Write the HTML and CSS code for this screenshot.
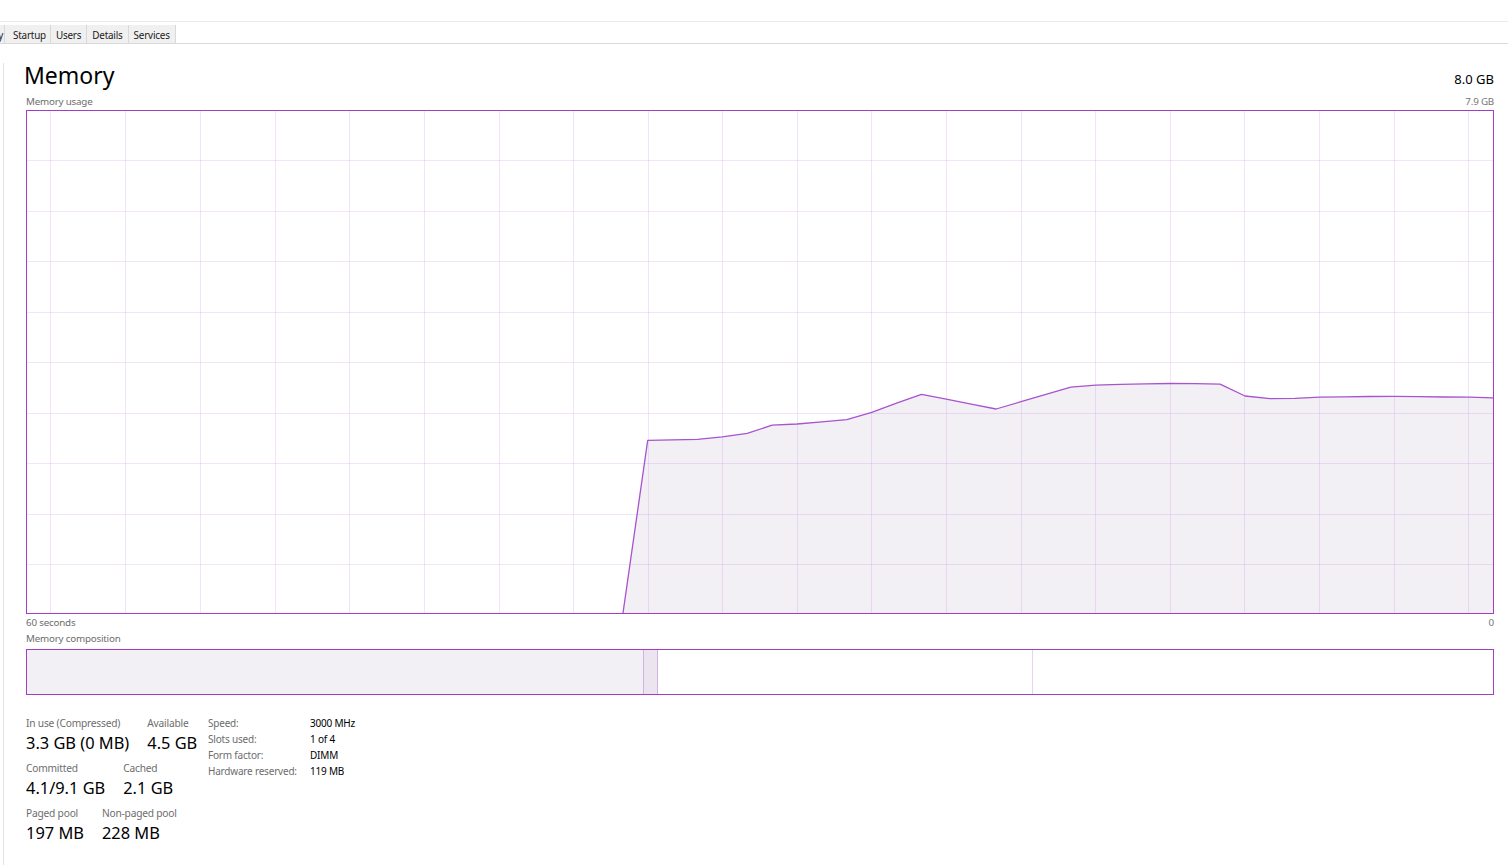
FILE: index.html
```html
<!DOCTYPE html>
<html lang="en">
<head>
<meta charset="utf-8">
<title>Task Manager – Memory</title>
<link rel="stylesheet" href="styles.css">
</head>
<body>
<div class="window">
  <div class="titlebar"></div>
  <nav class="tabs">
    <div class="tab tab-clipped"><span>App history</span></div>
    <div class="tab tab-startup">Startup</div>
    <div class="tab">Users</div>
    <div class="tab">Details</div>
    <div class="tab">Services</div>
  </nav>
  <div class="body">
    <aside class="sidebar"></aside>
    <main class="panel">
      <header class="panel-head">
        <h1 class="panel-title">Memory</h1>
        <span class="panel-total">8.0 GB</span>
      </header>
      <div class="caption-row caption-first"><span>Memory usage</span><span class="muted">7.9 GB</span></div>
      <div class="usage-graph">
        <svg class="usage-svg" viewBox="27 111 1466 502" preserveAspectRatio="none">
          <!-- area under the usage curve -->
          <polygon class="usage-fill" points="623,613 647.7,440.3 672.6,439.8 697.5,439.3 722.3,436.8 747.2,433.3 772.1,425.2 797,424 821.9,421.8 846.8,419.6 871.7,412.3 896.6,403.2 921.4,394.3 946.3,399.2 971.2,404.1 996.1,409 1021,401.7 1045.9,394.4 1070.8,387.2 1095.7,385.2 1120.5,384.4 1145.4,383.9 1170.3,383.5 1195.2,383.6 1220.1,384.2 1245,396 1269.9,398.6 1294.8,398.4 1319.6,397.1 1344.5,396.8 1369.4,396.5 1394.3,396.4 1419.2,396.6 1444.1,397 1469,397.2 1494,397.8 1494,613"/>
          <!-- grid -->
          <g class="grid">
            <line x1="50.5" y1="111" x2="50.5" y2="613"/>
            <line x1="125.5" y1="111" x2="125.5" y2="613"/>
            <line x1="200.5" y1="111" x2="200.5" y2="613"/>
            <line x1="275.5" y1="111" x2="275.5" y2="613"/>
            <line x1="349.5" y1="111" x2="349.5" y2="613"/>
            <line x1="424.5" y1="111" x2="424.5" y2="613"/>
            <line x1="499.5" y1="111" x2="499.5" y2="613"/>
            <line x1="573.5" y1="111" x2="573.5" y2="613"/>
            <line x1="648.5" y1="111" x2="648.5" y2="613"/>
            <line x1="722.5" y1="111" x2="722.5" y2="613"/>
            <line x1="797.5" y1="111" x2="797.5" y2="613"/>
            <line x1="871.5" y1="111" x2="871.5" y2="613"/>
            <line x1="946.5" y1="111" x2="946.5" y2="613"/>
            <line x1="1021.5" y1="111" x2="1021.5" y2="613"/>
            <line x1="1095.5" y1="111" x2="1095.5" y2="613"/>
            <line x1="1170.5" y1="111" x2="1170.5" y2="613"/>
            <line x1="1244.5" y1="111" x2="1244.5" y2="613"/>
            <line x1="1319.5" y1="111" x2="1319.5" y2="613"/>
            <line x1="1394.5" y1="111" x2="1394.5" y2="613"/>
            <line x1="1468.5" y1="111" x2="1468.5" y2="613"/>
            <line x1="27" y1="160.5" x2="1493" y2="160.5"/>
            <line x1="27" y1="211.5" x2="1493" y2="211.5"/>
            <line x1="27" y1="261.5" x2="1493" y2="261.5"/>
            <line x1="27" y1="312.5" x2="1493" y2="312.5"/>
            <line x1="27" y1="362.5" x2="1493" y2="362.5"/>
            <line x1="27" y1="413.5" x2="1493" y2="413.5"/>
            <line x1="27" y1="463.5" x2="1493" y2="463.5"/>
            <line x1="27" y1="514.5" x2="1493" y2="514.5"/>
            <line x1="27" y1="564.5" x2="1493" y2="564.5"/>
          </g>
          <!-- usage curve -->
          <polyline class="usage-line" points="623,613 647.7,440.3 672.6,439.8 697.5,439.3 722.3,436.8 747.2,433.3 772.1,425.2 797,424 821.9,421.8 846.8,419.6 871.7,412.3 896.6,403.2 921.4,394.3 946.3,399.2 971.2,404.1 996.1,409 1021,401.7 1045.9,394.4 1070.8,387.2 1095.7,385.2 1120.5,384.4 1145.4,383.9 1170.3,383.5 1195.2,383.6 1220.1,384.2 1245,396 1269.9,398.6 1294.8,398.4 1319.6,397.1 1344.5,396.8 1369.4,396.5 1394.3,396.4 1419.2,396.6 1444.1,397 1469,397.2 1494,397.8"/>
        </svg>
      </div>
      <div class="caption-row caption-axis"><span>60 seconds</span><span class="muted">0</span></div>
      <div class="caption-row caption-comp"><span>Memory composition</span></div>
      <div class="composition">
        <div class="seg seg-inuse"></div>
        <div class="seg seg-modified"></div>
        <div class="seg seg-standby"></div>
        <div class="seg seg-free"></div>
      </div>
      <section class="stats">
        <div class="stats-main">
          <div class="stat-row">
            <div class="stat"><div class="stat-label">In use (Compressed)</div><div class="stat-value">3.3 GB (0 MB)</div></div>
            <div class="stat"><div class="stat-label">Available</div><div class="stat-value">4.5 GB</div></div>
          </div>
          <div class="stat-row">
            <div class="stat"><div class="stat-label">Committed</div><div class="stat-value">4.1/9.1 GB</div></div>
            <div class="stat"><div class="stat-label">Cached</div><div class="stat-value">2.1 GB</div></div>
          </div>
          <div class="stat-row">
            <div class="stat"><div class="stat-label">Paged pool</div><div class="stat-value">197 MB</div></div>
            <div class="stat"><div class="stat-label">Non-paged pool</div><div class="stat-value">228 MB</div></div>
          </div>
        </div>
        <dl class="specs">
          <dt>Speed:</dt><dd>3000 MHz</dd>
          <dt>Slots used:</dt><dd>1 of 4</dd>
          <dt>Form factor:</dt><dd>DIMM</dd>
          <dt>Hardware reserved:</dt><dd>119 MB</dd>
        </dl>
      </section>
    </main>
  </div>
</div>
</body>
</html>
```

FILE: styles.css
```css
* {
  box-sizing: border-box;
}

html, body {
  margin: 0;
  height: 100%;
  background: #ffffff;
}

body {
  font-family: "Noto Sans", "Open Sans", sans-serif;
  color: #000000;
  overflow: hidden;
}

.window {
  height: 100vh;
  display: flex;
  flex-direction: column;
}

/* window chrome */
.titlebar {
  height: 22px;
  flex: none;
  border-bottom: 1px solid #ebebeb;
}

.tabs {
  flex: none;
  display: flex;
  margin-top: 3px;
  border-bottom: 1px solid #dadada;
}

.tab {
  height: 18px;
  padding: 2px 5px 0;
  background: #f0f0f0;
  border-right: 1px solid #d9d9d9;
  font-size: 9.9px;
  letter-spacing: -0.2px;
  line-height: 16px;
  color: #1a1a1a;
  white-space: nowrap;
}

.tab-startup {
  padding-left: 8px;
  padding-right: 4px;
}

.tab-clipped {
  width: 5px;
  padding: 2px 1px 0 0;
  overflow: hidden;
  display: flex;
  justify-content: flex-end;
}

.body {
  flex: 1;
  display: flex;
  min-height: 0;
}

.sidebar {
  flex: none;
  width: 4px;
  margin-top: 19px;
  border-right: 1px solid #e3e3e3;
}

/* memory panel */
.panel {
  flex: 1;
  min-width: 0;
  padding: 16.5px 14px 0 22px;
}

.panel-head {
  display: flex;
  justify-content: space-between;
  align-items: baseline;
  height: 28px;
}

.panel-title {
  margin: 0 0 0 -2px;
  font-size: 23px;
  font-weight: 400;
  line-height: 28px;
}

.panel-total {
  font-size: 13px;
  line-height: 20px;
}

.caption-row {
  display: flex;
  justify-content: space-between;
  font-size: 9.8px;
  letter-spacing: -0.2px;
  line-height: 13px;
  color: #6d6d6d;
}

.caption-first {
  margin-top: 6.2px;
  margin-bottom: 2.3px;
}

.caption-axis {
  margin-top: 1.6px;
}

.caption-comp {
  margin-top: 3.7px;
  margin-bottom: 3.7px;
}

.muted {
  color: #767676;
}

.usage-graph {
  height: 504px;
  border: 1px solid #a03ec5;
}

.usage-svg {
  display: block;
  width: 100%;
  height: 100%;
}

.usage-fill {
  fill: #f2f0f4;
}

.grid line {
  stroke: rgba(190, 110, 215, 0.18);
  stroke-width: 1;
}

.usage-line {
  fill: none;
  stroke: #a853cf;
  stroke-width: 1.3;
  stroke-linejoin: round;
}

/* composition bar */
.composition {
  height: 46px;
  border: 1px solid #a03ec5;
  display: flex;
}

.seg {
  flex: none;
  height: 100%;
}

.seg-inuse {
  width: 617px;
  background: #f2f0f4;
  border-right: 1px solid #d3b4e0;
}

.seg-modified {
  width: 14px;
  background: #ece5f0;
  border-right: 1px solid #d3b4e0;
}

.seg-standby {
  width: 375px;
  border-right: 1px solid #e8d2ef;
}

.seg-free {
  flex: 1;
}

/* figures */
.stats {
  margin-top: 21.7px;
  display: flex;
  align-items: flex-start;
}

.stats-main {
  flex: none;
  width: 182px;
  display: flex;
  flex-direction: column;
  gap: 5.2px;
}

.stat-row {
  display: flex;
  gap: 18px;
}

.stat-label {
  font-size: 10.2px;
  letter-spacing: -0.2px;
  line-height: 13px;
  color: #6d6d6d;
  white-space: nowrap;
}

.stat-value {
  font-size: 16.4px;
  line-height: 26.8px;
  color: #000000;
  white-space: nowrap;
}

.specs {
  margin: -1.6px 0 0;
  display: grid;
  grid-template-columns: 102px auto;
  font-size: 10px;
  letter-spacing: -0.2px;
  line-height: 16px;
}

.specs dt {
  color: #6d6d6d;
}

.specs dd {
  margin: 0;
  color: #000000;
}
```
